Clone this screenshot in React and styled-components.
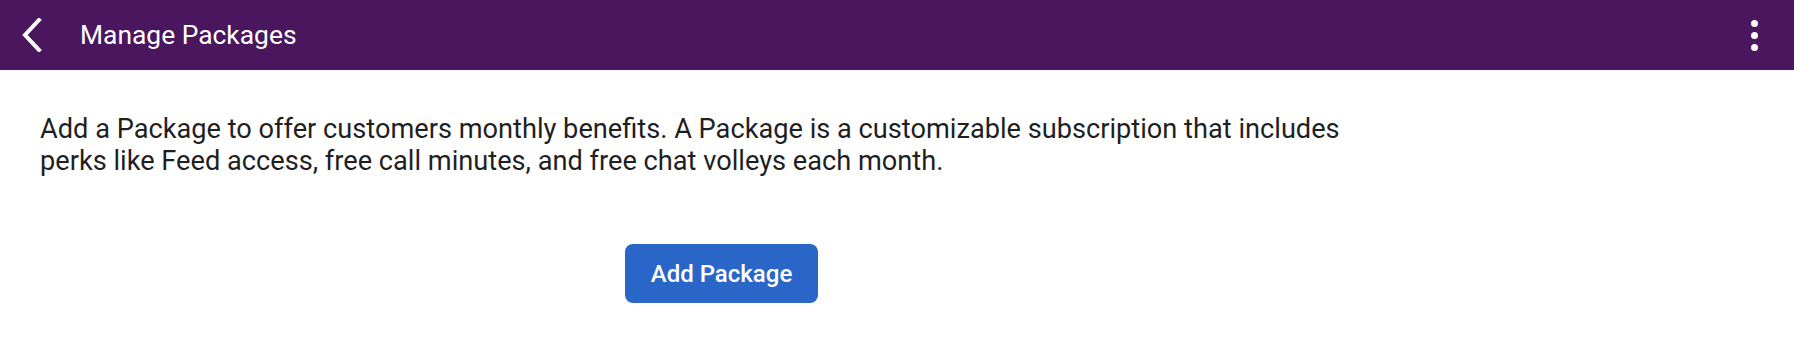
import React from 'react';
import styled, { createGlobalStyle } from 'styled-components';

const GlobalStyle = createGlobalStyle`
  html, body {
    margin: 0;
    padding: 0;
    background: #ffffff;
  }

  body {
    font-family: Roboto, "Noto Sans", "Liberation Sans", sans-serif;
    -webkit-font-smoothing: antialiased;
  }
`;

const TopBar = styled.header`
  display: flex;
  align-items: center;
  height: 70px;
  padding-left: 18px;
  padding-right: 30px;
  background-color: #4a165e;
  color: #ffffff;
`;

const IconButton = styled.button`
  display: flex;
  align-items: center;
  justify-content: center;
  padding: 0;
  border: 0;
  background: transparent;
  color: inherit;
  cursor: pointer;
`;

const BackButton = styled(IconButton)`
  width: 28px;
  height: 40px;
`;

const Title = styled.h1`
  flex: 1;
  margin: 0 0 0 34px;
  font-size: 26.4px;
  font-weight: 400;
  line-height: 1;
`;

const MenuButton = styled(IconButton)`
  flex-direction: column;
  gap: 5px;
  width: 20px;
  height: 44px;
`;

const Dot = styled.span`
  display: block;
  width: 7px;
  height: 7px;
  border-radius: 50%;
  background-color: #ffffff;
`;

const Content = styled.main`
  display: flex;
  flex-direction: column;
  width: 1363px;
  padding-top: 43px;
  padding-left: 40px;
`;

const Description = styled.p`
  margin: 0;
  font-size: 27.2px;
  line-height: 32px;
  color: #1f1f1f;
`;

const PrimaryButton = styled.button`
  align-self: center;
  width: 193px;
  height: 59px;
  margin-top: 67px;
  border: 0;
  border-radius: 8px;
  background-color: #2a66c8;
  color: #ffffff;
  font-family: inherit;
  font-size: 24px;
  font-weight: 500;
  cursor: pointer;
`;

const Chevron = () => (
  <svg width="22" height="34" viewBox="0 0 22 34" fill="none">
    <path d="M18 2 L4 17 L18 32" stroke="currentColor" strokeWidth="4" strokeLinecap="square" />
  </svg>
);

export default function App() {
  return (
    <>
      <GlobalStyle />
      <TopBar>
        <BackButton aria-label="Back">
          <Chevron />
        </BackButton>
        <Title>Manage Packages</Title>
        <MenuButton aria-label="More">
          <Dot />
          <Dot />
          <Dot />
        </MenuButton>
      </TopBar>
      <Content>
        <Description>
          Add a Package to offer customers monthly benefits. A Package is a customizable subscription that includes
          perks like Feed access, free call minutes, and free chat volleys each month.
        </Description>
        <PrimaryButton>Add Package</PrimaryButton>
      </Content>
    </>
  );
}
